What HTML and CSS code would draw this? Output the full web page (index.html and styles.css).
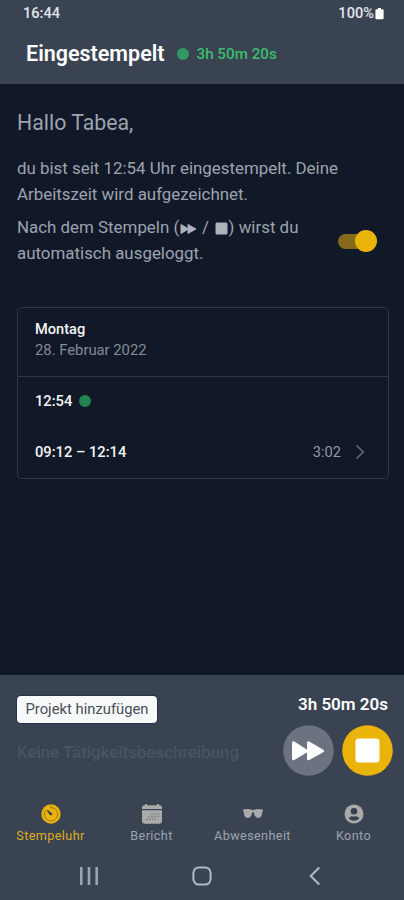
FILE: index.html
```html
<!DOCTYPE html>
<html lang="de">
<head>
<meta charset="utf-8">
<title>Stempeluhr</title>
<link rel="stylesheet" href="styles.css">
</head>
<body>
<div class="app">
  <header class="header">
    <div class="status">
      <span class="clock">16:44</span>
      <span class="battery">100%<svg width="9" height="13" viewBox="0 0 9 13"><path d="M3 1h3v1.2h1.6q1 0 1 1v8q0 1-1 1H1.4q-1 0-1-1v-8q0-1 1-1H3z" fill="#fff"/></svg></span>
    </div>
    <div class="titlebar">
      <h1 class="title">Eingestempelt</h1>
      <i class="dot dot-head"></i>
      <span class="elapsed">3h 50m 20s</span>
    </div>
  </header>

  <main class="main">
    <h2 class="hello">Hallo Tabea,</h2>
    <p class="text intro">du bist seit 12:54 Uhr eingestempelt. Deine<br>Arbeitszeit wird aufgezeichnet.</p>
    <div class="autologout">
      <p class="text">Nach dem Stempeln (<svg class="mini-ff" width="17" height="12" viewBox="0 0 17 12"><path d="M1 1.5v9L8.5 6zM8 1.5v9L16 6z" fill="#adb2bc" stroke="#adb2bc" stroke-linejoin="round"/></svg> / <svg class="mini-stop" width="13" height="13" viewBox="0 0 13 13"><rect x=".5" y=".5" width="12" height="12" rx="1.5" fill="#adb2bc"/></svg>) wirst du<br>automatisch ausgeloggt.</p>
      <div class="switch"><i class="knob"></i></div>
    </div>

    <section class="card">
      <div class="card-head">
        <div class="day">Montag</div>
        <div class="date">28. Februar 2022</div>
      </div>
      <div class="entry first"><span>12:54</span><i class="dot dot-entry"></i></div>
      <div class="entry second"><span>09:12 – 12:14</span><span class="duration">3:02</span>
        <svg class="chevron" width="10" height="16" viewBox="0 0 10 16"><path d="M1.5 1.5L8.3 8l-6.800 6.500" fill="none" stroke="#656c7a" stroke-width="1.500"/></svg>
      </div>
    </section>
  </main>

  <footer class="footer">
    <div class="tracker">
      <div class="project">
        <button class="add">Projekt hinzufügen</button>
        <div class="placeholder">Keine Tätigkeitsbeschreibung</div>
      </div>
      <div class="controls">
        <div class="timer">3h 50m 20s</div>
        <div class="buttons">
          <svg width="51" height="51" viewBox="0 0 51 51"><circle cx="25.5" cy="25.5" r="25.3" fill="#6b7280"/><path d="M10.500 17.800v16L23.500 26zM25.500 17.800v16L39.500 26z" fill="#fff" stroke="#fff" stroke-width="3" stroke-linejoin="round"/></svg>
          <svg width="51" height="51" viewBox="0 0 51 51"><circle cx="25.5" cy="25.5" r="25.3" fill="#eab308"/><rect x="13.5" y="13.5" width="24" height="24" rx="3" fill="#fff"/></svg>
        </div>
      </div>
    </div>

    <nav class="tabs">
      <div class="tab active">
        <svg width="20" height="20" viewBox="0 0 20 20"><circle cx="10" cy="10" r="9.7" fill="#eab308"/><path d="M10 1.2v3.2M10 3.5a6.7 6.7 0 1 1-5.4 2.8" fill="none" stroke="#9b7b20" stroke-width="1"/><path d="M6.2 6.2L10.7 9.5 9.3 10.9z" fill="#374151" stroke="#374151"/><circle cx="10.1" cy="10.1" r="1.2" fill="#374151"/></svg>
        <span>Stempeluhr</span>
      </div>
      <div class="tab">
        <svg width="20" height="20" viewBox="0 0 20 20"><path d="M0 5V3.5Q0 1.2 2.3 1.2H3V0h2v1.2h10V0h2v1.2h.7Q20 1.2 20 3.5V5zM0 6.3h20v11q0 2.4-2.3 2.4H2.3Q0 19.700 0 17.300z" fill="#aaa"/><path d="M9 10h8M6 12.700h11M4 15.400h10" stroke="#858990" stroke-width="1.6" stroke-dasharray="2 1"/></svg>
        <span>Bericht</span>
      </div>
      <div class="tab">
        <svg width="20" height="20" viewBox="0 0 20 20"><path d="M.2 5.400Q5 4.200 9 5.800q1 .5 2 0Q15 4.200 19.800 5.400v2l-.6.6c0 4-1.400 5.900-3.900 5.900-2.900 0-4-2.100-4.400-5.300Q10 7.900 9.100 8.600c-.4 3.200-1.500 5.300-4.400 5.300C2.200 13.900.8 12 .8 8L.2 7.400z" fill="#aaa"/></svg>
        <span>Abwesenheit</span>
      </div>
      <div class="tab">
        <svg width="20" height="20" viewBox="0 0 20 20"><circle cx="10" cy="10" r="9.500" fill="#aaa"/><circle cx="10" cy="7.200" r="3.300" fill="#374151"/><path d="M4.700 14.500q1.200-2.300 3.300-2.300 2 .8 4 0 2.100 0 3.300 2.300Q13 16.800 10 16.800t-5.300-2.300z" fill="#374151"/></svg>
        <span>Konto</span>
      </div>
    </nav>

    <div class="sysnav">
      <svg width="20" height="20" viewBox="0 0 20 20"><path d="M2.300 1v18M10 1v18M17.700 1v18" stroke="#9ca5b3" stroke-width="2.600"/></svg>
      <svg width="20" height="20" viewBox="0 0 20 20"><rect x="1.400" y="1.400" width="17.200" height="17.200" rx="5.500" fill="none" stroke="#b2bac7" stroke-width="2"/></svg>
      <svg width="20" height="20" viewBox="0 0 20 20"><path d="M14.300 1.500L5.700 10l8.600 8.500" fill="none" stroke="#b2bac7" stroke-width="2"/></svg>
    </div>
  </footer>
</div>
</body>
</html>
```
FILE: styles.css
```css
* { box-sizing: border-box; }
body { margin: 0; background: #111827; font-family: Roboto, "Liberation Sans", sans-serif; }
h1, h2, p { margin: 0; }
svg { display: block; flex: none; }
.app { display: flex; flex-direction: column; height: 900px; overflow: hidden; white-space: nowrap; }

.header { height: 84px; background: #3a4352; }
.status { display: flex; justify-content: space-between; height: 26px; align-items: center; padding: 0 20px 0 23px; color: #e1e5ee; font-size: 14.600px; font-weight: 500; }
.battery { display: flex; align-items: center; gap: 1px; }
.titlebar { display: flex; align-items: center; height: 56px; padding-left: 26px; }
.title { color: #fff; font-size: 21.500px; font-weight: 600; line-height: 28px; }
.dot { display: block; border-radius: 50%; width: 12px; height: 12px; flex: none; }
.dot-head { margin-left: 12px; background: #329a64; }
.elapsed { margin-left: 8px; color: #3bbd70; font-size: 15.200px; font-weight: 500; }

.main { flex: 1; padding: 26px 15px 0 17px; color: #9ca3af; }
.hello { font-size: 21.300px; font-weight: 400; line-height: 26px; }
.text { font-size: 16.900px; line-height: 25.500px; }
.intro { margin-top: 20px; }
.autologout { display: flex; justify-content: space-between; margin-top: 8px; padding-right: 12px; }
.mini-ff, .mini-stop { display: inline-block; vertical-align: -1.500px; }
.mini-ff { margin: 0 .5px 0 1px; }
.mini-stop { margin: 0 1px 0 1.500px; }
.switch { position: relative; width: 39px; height: 22px; margin-top: 15px; display: flex; justify-content: flex-end; align-items: center; }
.switch::before { content: ""; position: absolute; left: 0; top: 3.500px; width: 36px; height: 15px; border-radius: 8px; background: #856a1b; }
.knob { position: relative; width: 22px; height: 22px; border-radius: 50%; background: #eab308; }

.card { margin-top: 41px; height: 172px; border: 1.500px solid #303746; border-radius: 5px; }
.card-head { height: 69px; border-bottom: 1.500px solid #303746; padding: 11px 17px; }
.day { color: #f3f4f6; font-size: 14.600px; font-weight: 500; line-height: 21px; }
.date { color: #858b97; font-size: 14.800px; line-height: 21px; }
.entry { display: flex; align-items: center; height: 51px; padding: 0 23px 3px 17px; color: #f3f4f6; font-size: 14.700px; font-weight: 500; }
.dot-entry { margin-left: 7px; background: #218451; }
.duration { margin-left: auto; color: #9298a3; font-weight: 400; }
.chevron { margin-left: 14px; }

.footer { height: 225px; background: #3a4352; display: flex; flex-direction: column; }
.tracker { display: flex; justify-content: space-between; height: 121px; padding: 20px 11px 0 17px; }
.add { display: block; width: 140px; height: 27px; margin-top: 1px; padding: 0 0 2px; border: 0; border-radius: 4px; background: #f7f9fb; box-shadow: 0 0 0 1px #26314d; color: #4b4f57; font: 400 14.800px Roboto, sans-serif; }
.placeholder { margin-top: 18px; color: #4a5362; font-size: 16.850px; font-weight: 500; line-height: 22px; }
.timer { color: #fff; font-size: 17px; font-weight: 600; line-height: 18px; text-align: right; padding-right: 5px; }
.buttons { display: flex; gap: 8px; margin-top: 12px; }
.tabs { display: grid; grid-template-columns: repeat(4, 101px); height: 68px; padding-top: 8px; }
.tab { display: flex; flex-direction: column; align-items: center; gap: 3px; color: #9ca3af; font-size: 12.600px; line-height: 18px; letter-spacing: .400px; }
.active { color: #dcae1c; }
.sysnav { display: flex; justify-content: center; gap: 93px; padding-top: 2px; height: 36px; }
```
